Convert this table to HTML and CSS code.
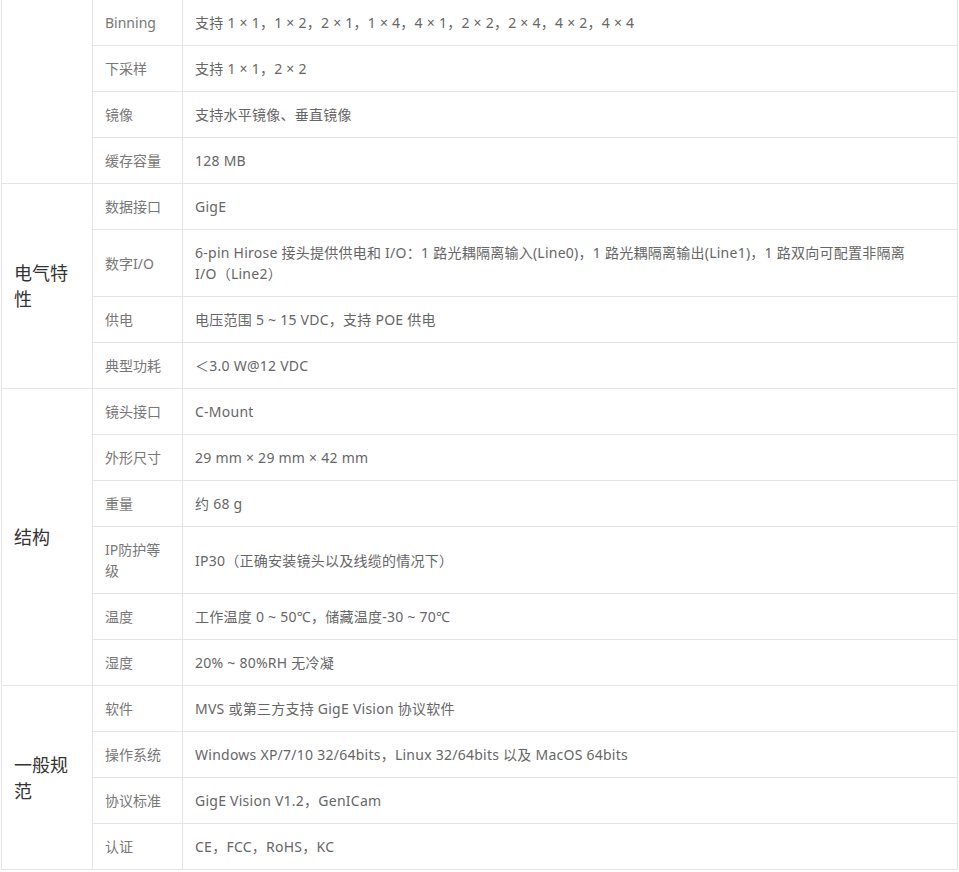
FILE: index.html
```html
<!DOCTYPE html>
<html lang="zh-CN">
<head>
    <meta charset="UTF-8" />
    <meta name="viewport" content="width=device-width, initial-scale=1.0"/>
    <title>产品参数</title>
    <link rel="stylesheet" href="styles.css">
</head>
<body>
<div class="spec-wrap">
    <table class="spec-table">
        <colgroup>
            <col class="col-group">
            <col class="col-label">
            <col class="col-value">
        </colgroup>
        <tbody>
            <!-- 图像 (continued from above) -->
            <tr>
                <td class="group" rowspan="4"></td>
                <td class="label">Binning</td>
                <td class="value">支持 1 × 1，1 × 2，2 × 1，1 × 4，4 × 1，2 × 2，2 × 4，4 × 2，4 × 4</td>
            </tr>
            <tr>
                <td class="label">下采样</td>
                <td class="value">支持 1 × 1，2 × 2</td>
            </tr>
            <tr>
                <td class="label">镜像</td>
                <td class="value">支持水平镜像、垂直镜像</td>
            </tr>
            <tr>
                <td class="label">缓存容量</td>
                <td class="value">128 MB</td>
            </tr>

            <!-- 电气特性 -->
            <tr>
                <td class="group" rowspan="4">电气特性</td>
                <td class="label">数据接口</td>
                <td class="value">GigE</td>
            </tr>
            <tr>
                <td class="label">数字I/O</td>
                <td class="value">6-pin Hirose 接头提供供电和 I/O：1 路光耦隔离输入(Line0)，1 路光耦隔离输出(Line1)，1 路双向可配置非隔离 <span class="nowrap">I/O（Line2）</span></td>
            </tr>
            <tr>
                <td class="label">供电</td>
                <td class="value">电压范围 5 ~ 15 VDC，支持 POE 供电</td>
            </tr>
            <tr>
                <td class="label">典型功耗</td>
                <td class="value">＜3.0 W@12 VDC</td>
            </tr>

            <!-- 结构 -->
            <tr>
                <td class="group" rowspan="6">结构</td>
                <td class="label">镜头接口</td>
                <td class="value">C-Mount</td>
            </tr>
            <tr>
                <td class="label">外形尺寸</td>
                <td class="value">29 mm × 29 mm × 42 mm</td>
            </tr>
            <tr>
                <td class="label">重量</td>
                <td class="value">约 68 g</td>
            </tr>
            <tr>
                <td class="label">IP防护等级</td>
                <td class="value">IP30（正确安装镜头以及线缆的情况下）</td>
            </tr>
            <tr>
                <td class="label">温度</td>
                <td class="value">工作温度 0 ~ 50℃，储藏温度-30 ~ 70℃</td>
            </tr>
            <tr>
                <td class="label">湿度</td>
                <td class="value">20% ~ 80%RH 无冷凝</td>
            </tr>

            <!-- 一般规范 -->
            <tr>
                <td class="group" rowspan="4">一般规范</td>
                <td class="label">软件</td>
                <td class="value">MVS 或第三方支持 GigE Vision 协议软件</td>
            </tr>
            <tr>
                <td class="label">操作系统</td>
                <td class="value">Windows XP/7/10 32/64bits，Linux 32/64bits 以及 MacOS 64bits</td>
            </tr>
            <tr>
                <td class="label">协议标准</td>
                <td class="value">GigE Vision V1.2，GenICam</td>
            </tr>
            <tr>
                <td class="label">认证</td>
                <td class="value">CE，FCC，RoHS，KC</td>
            </tr>
        </tbody>
    </table>
</div>
</body>
</html>
```

FILE: styles.css
```css
:root {
    --border: #e5e5e5;
    --text: #333;
    --text-muted: #666;
    --text-label: #777;
}

body {
    font-family: "Noto Sans", "Noto Sans CJK SC", sans-serif;
    margin: 0;
    padding: 0;
    background-color: #fff;
    color: var(--text);
}

.spec-wrap {
    padding: 0 1px;
}

.spec-table {
    width: 957px;
    margin-top: -1px;
    border-collapse: collapse;
    table-layout: fixed;
    font-size: 14px;
    line-height: 21px;
}

.col-group {
    width: 91px;
}

.col-label {
    width: 90px;
}

.spec-table td {
    border: 1px solid var(--border);
    padding: 12px 12px;
    vertical-align: middle;
    text-align: left;
}

.spec-table .group {
    font-size: 18px;
    line-height: 26px;
    color: var(--text);
}

.spec-table .label {
    color: var(--text-label);
}

.spec-table .value {
    color: var(--text-muted);
    letter-spacing: 0.25px;
}

.nowrap {
    white-space: nowrap;
}
```
